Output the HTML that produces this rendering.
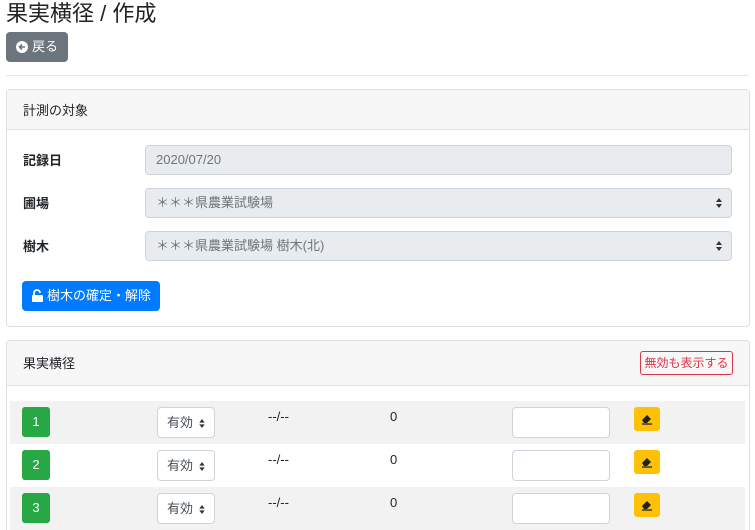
<!DOCTYPE html>
<html><head><meta charset="utf-8"><style>
*{box-sizing:border-box;margin:0;padding:0}
html,body{width:755px;height:530px;overflow:hidden}
body{background:#fff;font-family:"Liberation Sans","Noto Sans CJK JP",sans-serif;color:#212529;font-size:13px;position:relative}
.a{position:absolute}
.card{position:absolute;border:1px solid #dfdfdf;border-radius:4px;background:#fff;overflow:hidden}
.hd{position:absolute;left:0;right:0;top:0;background:#f7f7f7;border-bottom:1px solid #dfdfdf}
.inp{position:absolute;left:145px;width:587px;height:30px;background:#e9ecef;border:1px solid #ced4da;border-radius:4px;color:#6c757d;font-size:13px;line-height:28px;padding-left:10px}
.lbl{position:absolute;left:23px;font-weight:bold;font-size:13px}
.arr{position:absolute;right:9px;top:9px;width:6px;height:10px}
.row{position:absolute;left:10px;width:735px;height:43px}
.badge{position:absolute;left:12px;top:6px;width:28px;height:30px;background:#28a745;border-radius:3px;color:#fff;text-align:center;line-height:30px;font-size:13px}
.sel{position:absolute;left:147px;top:6px;width:58px;height:31px;border:1px solid #ced4da;border-radius:4px;background:#fff;font-size:13px;line-height:29px;padding-left:9px;color:#495057}
.txt{position:absolute;top:8px;font-size:13px}
.in2{position:absolute;left:502px;top:6px;width:98px;height:31px;border:1px solid #ced4da;border-radius:4px;background:#fff}
.er{position:absolute;left:624px;top:6px;width:26px;height:24px;background:#ffc107;border-radius:3px}
</style></head><body>
<div class="a" style="left:6px;top:0px;font-size:22px;line-height:28px;color:#222">果実横径 / 作成</div>
<div class="a" style="left:6px;top:32px;width:62px;height:30px;background:#6c757d;border-radius:4px;color:#fff;font-size:13px;line-height:30px;padding-left:26px">戻る
<svg class="a" style="left:10px;top:9px" width="12" height="12" viewBox="0 0 12 12"><circle cx="6" cy="6" r="6" fill="#fff"/><path d="M9 6H4M6 3.5L3.5 6 6 8.5" stroke="#6c757d" stroke-width="1.6" fill="none"/></svg></div>
<div class="a" style="left:6px;top:75px;width:743px;height:1px;background:#e6e6e6"></div>

<div class="card" style="left:6px;top:89px;width:744px;height:238px">
 <div class="hd" style="height:40px"><span class="a" style="left:16px;top:10px">計測の対象</span></div>
</div>
<div class="lbl" style="top:150px">記録日</div>
<div class="inp" style="top:145px">2020/07/20</div>
<div class="lbl" style="top:193px">圃場</div>
<div class="inp" style="top:188px">＊＊＊県農業試験場<svg class="arr" viewBox="0 0 6 10"><path d="M0 4L3 0 6 4ZM0 6L3 10 6 6Z" fill="#333"/></svg></div>
<div class="lbl" style="top:236px">樹木</div>
<div class="inp" style="top:231px">＊＊＊県農業試験場 樹木(北)<svg class="arr" viewBox="0 0 6 10"><path d="M0 4L3 0 6 4ZM0 6L3 10 6 6Z" fill="#333"/></svg></div>
<div class="a" style="left:22px;top:281px;width:138px;height:30px;background:#007bff;border-radius:4px;color:#fff;line-height:30px;padding-left:25px;font-size:13px">樹木の確定・解除
<svg class="a" style="left:10px;top:8px" width="11" height="13" viewBox="0 0 11 13"><path d="M2 6V4a3 3 0 0 1 6 0" stroke="#fff" stroke-width="1.8" fill="none"/><rect x="0" y="6" width="11" height="7" rx="1" fill="#fff"/></svg></div>

<div class="card" style="left:6px;top:340px;width:744px;height:190px;border-bottom:none;border-radius:4px 4px 0 0">
 <div class="hd" style="height:45px"><span class="a" style="left:16px;top:12px">果実横径</span></div>
</div>
<div class="a" style="left:640px;top:351px;width:93px;height:24px;border:1px solid #dc3545;border-radius:3px;color:#dc3545;font-size:12px;line-height:22px;text-align:center">無効も表示する</div>

<div class="row" style="top:401px;background:#f2f2f2"><div class="badge">1</div><div class="sel">有効<svg class="a" style="left:41px;top:11px" width="6" height="9" viewBox="0 0 6 10"><path d="M0 4L3 0 6 4ZM0 6L3 10 6 6Z" fill="#333"/></svg></div><div class="txt" style="left:258px">--/--</div><div class="txt" style="left:380px">0</div><div class="in2"></div><div class="er"><svg class="a" style="left:7px;top:7px" width="12" height="11" viewBox="0 0 12 11"><path d="M1 6L6 1 10 5 6 9H3Z" fill="#222"/><path d="M1 10H11" stroke="#222" stroke-width="1.3"/></svg></div></div>
<div class="row" style="top:444px;background:#fff"><div class="badge">2</div><div class="sel">有効<svg class="a" style="left:41px;top:11px" width="6" height="9" viewBox="0 0 6 10"><path d="M0 4L3 0 6 4ZM0 6L3 10 6 6Z" fill="#333"/></svg></div><div class="txt" style="left:258px">--/--</div><div class="txt" style="left:380px">0</div><div class="in2"></div><div class="er"><svg class="a" style="left:7px;top:7px" width="12" height="11" viewBox="0 0 12 11"><path d="M1 6L6 1 10 5 6 9H3Z" fill="#222"/><path d="M1 10H11" stroke="#222" stroke-width="1.3"/></svg></div></div>
<div class="row" style="top:487px;background:#f2f2f2"><div class="badge">3</div><div class="sel">有効<svg class="a" style="left:41px;top:11px" width="6" height="9" viewBox="0 0 6 10"><path d="M0 4L3 0 6 4ZM0 6L3 10 6 6Z" fill="#333"/></svg></div><div class="txt" style="left:258px">--/--</div><div class="txt" style="left:380px">0</div><div class="in2"></div><div class="er"><svg class="a" style="left:7px;top:7px" width="12" height="11" viewBox="0 0 12 11"><path d="M1 6L6 1 10 5 6 9H3Z" fill="#222"/><path d="M1 10H11" stroke="#222" stroke-width="1.3"/></svg></div></div>
</body></html>
